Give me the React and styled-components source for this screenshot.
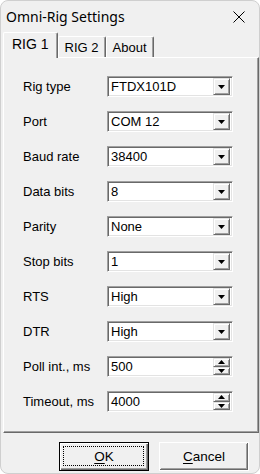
import React from "react";
import styled, { createGlobalStyle } from "styled-components";

const GlobalStyle = createGlobalStyle`
  html, body {
    margin: 0;
    padding: 0;
    background: #ffffff;
  }
`;

const Window = styled.div`
  width: 260px;
  height: 474px;
  box-sizing: border-box;
  background: #f0f0f0;
  border-radius: 8px;
  border: 1px solid #cfcfcf;
  overflow: hidden;
  display: flex;
  flex-direction: column;
  font-family: "Liberation Sans", Arial, sans-serif;
  font-size: 13px;
  color: #000;
`;

const TitleBar = styled.div`
  height: 31px;
  display: flex;
  align-items: center;
  justify-content: space-between;
  padding: 0 14px 0 5px;
  font-family: "Noto Sans", "Open Sans", sans-serif;
  font-size: 14px;
`;

const TabStrip = styled.div`
  display: flex;
  align-items: flex-end;
  height: 25px;
  padding-left: 2px;
  position: relative;
  z-index: 1;
`;

const Tab = styled.div`
  box-sizing: border-box;
  height: ${(p) => (p.active ? "26px" : "21px")};
  margin-bottom: ${(p) => (p.active ? "-1px" : "0")};
  padding: 0 ${(p) => (p.active ? "8px" : "6px")};
  padding-bottom: ${(p) => (p.active ? "3px" : "0")};
  display: flex;
  align-items: center;
  background: #f0f0f0;
  border-left: 1px solid #ffffff;
  border-top: 1px solid #ffffff;
  border-right: 1px solid #696969;
  box-shadow: inset -1px 0 #a0a0a0;
  border-radius: 2px 2px 0 0;
  font-size: ${(p) => (p.active ? "14px" : "13px")};
`;

const Panel = styled.div`
  box-sizing: border-box;
  height: 376px;
  margin-left: 2px;
  background: #f0f0f0;
  border-left: 1px solid #ffffff;
  border-top: 1px solid #ffffff;
  border-right: 1px solid #696969;
  border-bottom: 1px solid #696969;
  box-shadow: inset -1px -1px #a0a0a0;
  padding: 18px 0 0 19px;
  display: flex;
  flex-direction: column;
  gap: 14px;
`;

const Row = styled.div`
  display: flex;
  align-items: center;
  height: 21px;
`;

const Label = styled.span`
  width: 84px;
  white-space: nowrap;
`;

const Field = styled.div`
  box-sizing: border-box;
  width: 126px;
  height: 21px;
  background: #ffffff;
  border: 1px solid;
  border-color: #a0a0a0 #ffffff #ffffff #a0a0a0;
  box-shadow: inset 1px 1px #696969, inset -1px -1px #e3e3e3;
  display: flex;
  align-items: center;
  padding: 1px 2px 1px 3px;
`;

const Value = styled.span`
  flex: 1;
  line-height: 17px;
`;

const ArrowButton = styled.div`
  box-sizing: border-box;
  width: 17px;
  height: 17px;
  background: #f0f0f0;
  border: 1px solid;
  border-color: #e3e3e3 #696969 #696969 #e3e3e3;
  box-shadow: inset 1px 1px #ffffff, inset -1px -1px #a0a0a0;
  display: flex;
  align-items: center;
  justify-content: center;
`;

const SpinBox = styled.div`
  width: 17px;
  height: 17px;
  display: flex;
  flex-direction: column;
`;

const SpinHalf = styled(ArrowButton)`
  height: 8.5px;
`;

const Footer = styled.div`
  flex: 1;
  display: flex;
  justify-content: flex-end;
  align-items: flex-start;
  gap: 10px;
  padding: 9px 10px 0 0;
`;

const Button = styled.button`
  box-sizing: border-box;
  width: 90px;
  height: 29px;
  padding: 0;
  background: #f0f0f0;
  font-family: "Liberation Sans", Arial, sans-serif;
  font-size: 13.5px;
  color: #000;
  border: 1px solid ${(p) => (p.isDefault ? "#000000" : "#ffffff")};
  box-shadow: ${(p) =>
    p.isDefault
      ? "inset 1px 1px #ffffff, inset -1px -1px #696969, inset -2px -2px #a0a0a0"
      : "inset -1px -1px #696969, inset 1px 1px #f0f0f0, inset -2px -2px #a0a0a0"};
  display: flex;
  align-items: center;
  justify-content: center;
  position: relative;
`;

const FocusRing = styled.span`
  position: absolute;
  inset: 3px 4px 4px 3px;
  border: 1px dotted #000;
`;

const Under = styled.span`
  text-decoration: underline;
  text-underline-offset: 2px;
`;

const DownTri = () => (
  <svg width="7" height="4" viewBox="0 0 7 4">
    <path d="M0 0h7L3.5 4z" fill="#000" />
  </svg>
);

const UpSmall = () => (
  <svg width="7" height="4" viewBox="0 0 7 4">
    <path d="M3.5 0L7 4H0z" fill="#000" />
  </svg>
);

const rows = [
  ["Rig type", "FTDX101D", "combo"],
  ["Port", "COM 12", "combo"],
  ["Baud rate", "38400", "combo"],
  ["Data bits", "8", "combo"],
  ["Parity", "None", "combo"],
  ["Stop bits", "1", "combo"],
  ["RTS", "High", "combo"],
  ["DTR", "High", "combo"],
  ["Poll int., ms", "500", "spin"],
  ["Timeout, ms", "4000", "spin"],
];

export default function App() {
  return (
    <>
      <GlobalStyle />
      <Window>
        <TitleBar>
          <span>Omni-Rig Settings</span>
          <svg width="12" height="12" viewBox="0 0 12 12">
            <path d="M0.5 0.5L11.5 11.5M11.5 0.5L0.5 11.5" stroke="#000" strokeWidth="1" />
          </svg>
        </TitleBar>
        <TabStrip>
          <Tab active>RIG 1</Tab>
          <Tab>RIG 2</Tab>
          <Tab>About</Tab>
        </TabStrip>
        <Panel>
          {rows.map(([label, value, kind]) => (
            <Row key={label}>
              <Label>{label}</Label>
              <Field>
                <Value>{value}</Value>
                {kind === "combo" ? (
                  <ArrowButton>
                    <DownTri />
                  </ArrowButton>
                ) : (
                  <SpinBox>
                    <SpinHalf>
                      <UpSmall />
                    </SpinHalf>
                    <SpinHalf>
                      <DownTri />
                    </SpinHalf>
                  </SpinBox>
                )}
              </Field>
            </Row>
          ))}
        </Panel>
        <Footer>
          <Button isDefault>
            <FocusRing />
            <span>
              <Under>O</Under>K
            </span>
          </Button>
          <Button>
            <span>
              <Under>C</Under>ancel
            </span>
          </Button>
        </Footer>
      </Window>
    </>
  );
}
